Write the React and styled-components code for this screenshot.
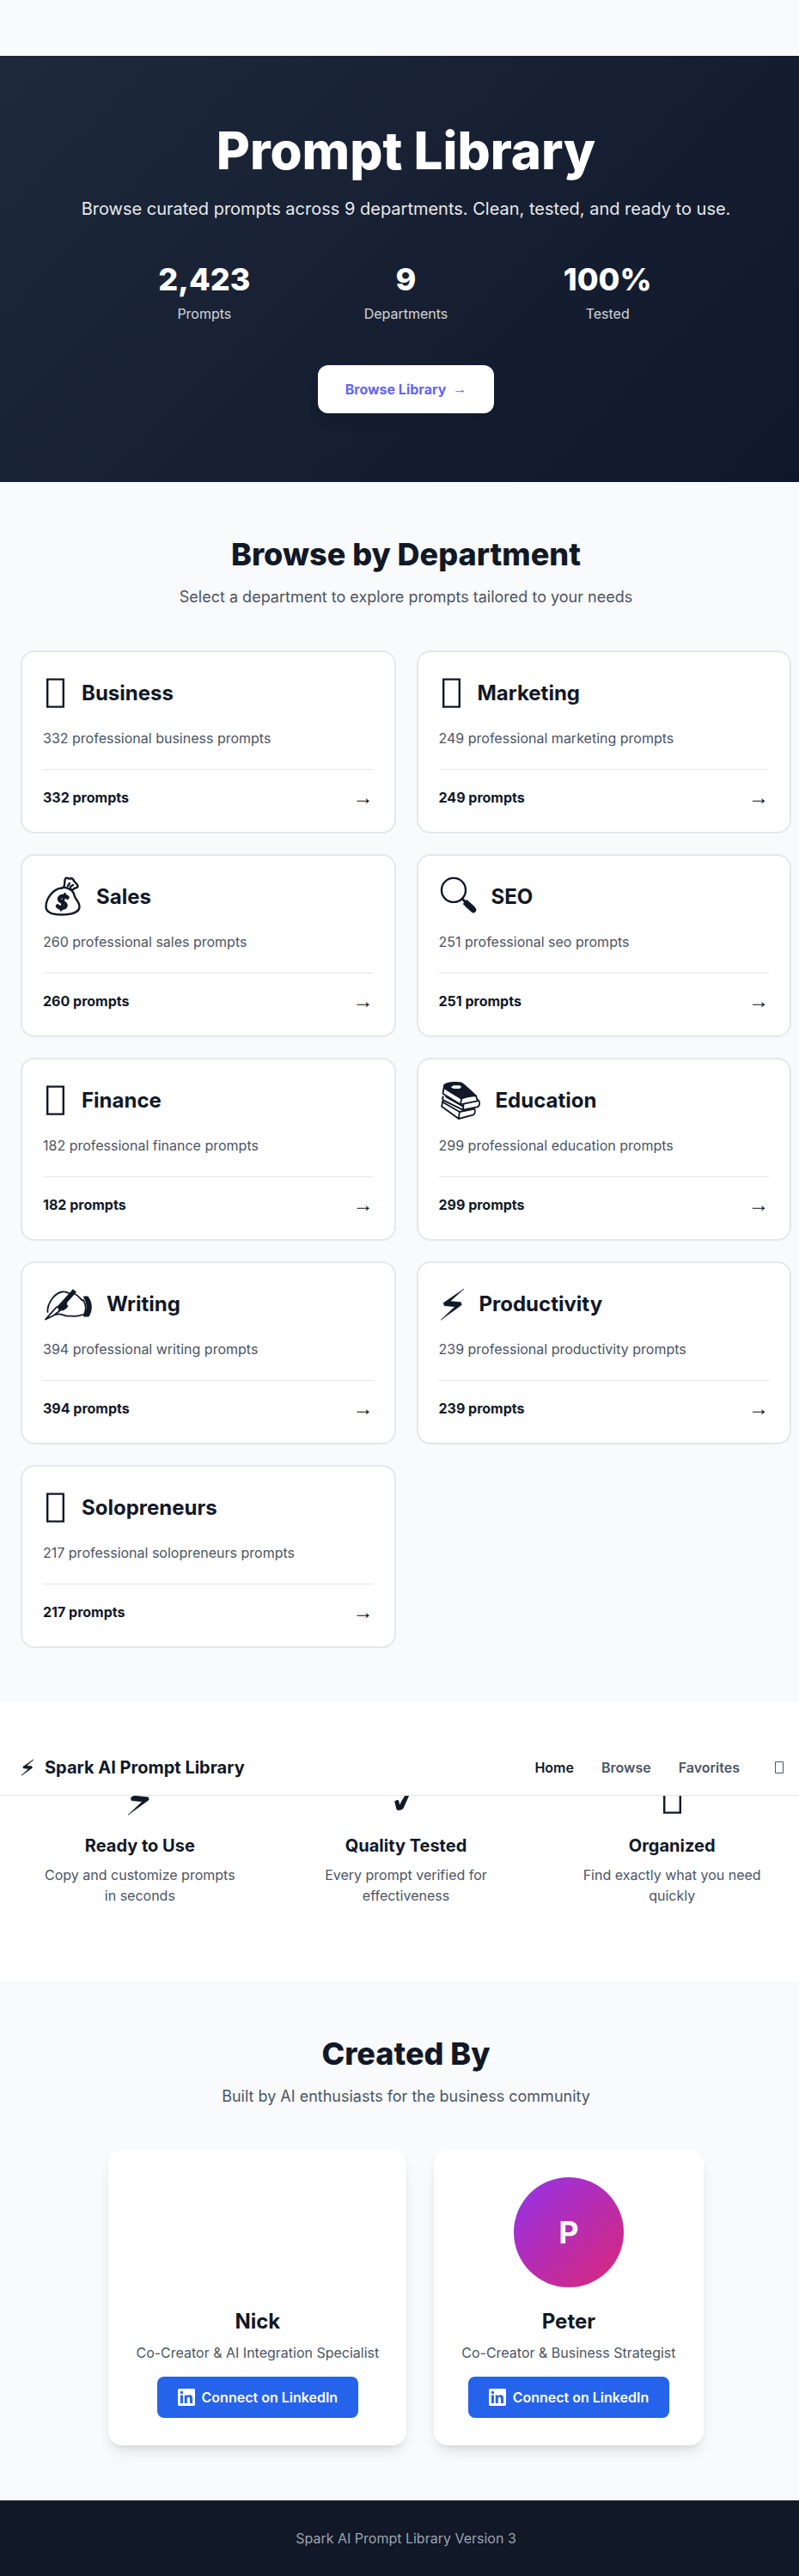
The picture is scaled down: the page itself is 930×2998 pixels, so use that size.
import React from "react";
import styled, { createGlobalStyle } from "styled-components";

const GlobalStyle = createGlobalStyle`
  *, *::before, *::after { box-sizing: border-box; }
  body {
    margin: 0;
    overflow-x: hidden;
    background: #f9fafb;
    color: #111827;
    font-family: Inter, sans-serif;
    font-size: 16px;
    line-height: 24px;
  }
  h1, h2, h3, p { margin: 0; }
  a { color: inherit; text-decoration: none; }
  button { font: inherit; cursor: pointer; }
  svg { display: block; flex: none; }
`;

/* The page runs under the 15px scrollbar gutter on its right side. */
const Page = styled.div`
  width: calc(100% + 15px);
  padding-top: 65px;
`;

const Container = styled.div`
  max-width: 1280px;
  margin: 0 auto;
  padding: 0 24px;
`;

const Hero = styled.section`
  padding: 80px 24px;
  color: #ffffff;
  text-align: center;
  background: linear-gradient(135deg, #1e293b 0%, #0f172a 100%);
`;

const HeroTitle = styled.h1`
  margin-bottom: 24px;
  font-size: 60px;
  line-height: 60px;
  font-weight: 800;
`;

const HeroText = styled.p`
  margin-bottom: 48px;
  font-size: 20px;
  line-height: 28px;
  opacity: 0.9;
`;

const Stats = styled.div`
  display: grid;
  grid-template-columns: repeat(3, 1fr);
  gap: 32px;
  max-width: 672px;
  margin: 0 auto 48px;
`;

const StatValue = styled.div`
  margin-bottom: 8px;
  font-size: 36px;
  line-height: 40px;
  font-weight: 800;
`;

const StatLabel = styled.div`
  opacity: 0.8;
`;

const HeroLink = styled.a`
  display: inline-flex;
  align-items: center;
  gap: 8px;
  padding: 16px 32px;
  border-radius: 12px;
  background: #ffffff;
  color: #6366f1;
  font-weight: 700;
  vertical-align: top;
  box-shadow: 0 10px 15px -3px rgba(0, 0, 0, 0.1);
`;

const Arrow = styled.span`
  font-family: "Liberation Sans", sans-serif;
  font-size: ${(p) => (p.$large ? "24px" : "16px")};
  line-height: ${(p) => (p.$large ? "32px" : "24px")};
`;

const Section = styled.section`
  position: relative;
  padding: 64px 0;
  background: ${(p) => (p.$white ? "#ffffff" : "transparent")};
`;

const SectionHead = styled.div`
  margin-bottom: 48px;
  text-align: center;
`;

const SectionTitle = styled.h2`
  margin-bottom: 16px;
  font-size: 36px;
  line-height: 40px;
  font-weight: 800;
`;

const SectionText = styled.p`
  color: #4b5563;
  font-size: 18px;
  line-height: 28px;
`;

const CardGrid = styled.div`
  display: grid;
  grid-template-columns: repeat(2, 1fr);
  gap: 24px;
`;

const Card = styled.a`
  display: block;
  padding: 24px;
  border: 2px solid #e5e7eb;
  border-radius: 16px;
  background: #ffffff;
`;

const CardHead = styled.div`
  display: flex;
  align-items: center;
  gap: 16px;
  margin-bottom: 16px;
`;

const CardTitle = styled.h3`
  font-size: 24px;
  line-height: 32px;
  font-weight: 700;
`;

const CardText = styled.p`
  margin-bottom: 24px;
  color: #4b5563;
`;

const CardFoot = styled.div`
  display: flex;
  align-items: center;
  justify-content: space-between;
  padding-top: 16px;
  border-top: 1px solid #e5e7eb;
`;

const CardCount = styled.span`
  font-weight: 700;
`;

const Header = styled.header`
  position: absolute;
  top: 43px;
  left: 0;
  right: 0;
  z-index: 1;
  border-bottom: 1px solid #e5e7eb;
  background: #ffffff;
`;

const HeaderBar = styled(Container)`
  display: flex;
  align-items: center;
  justify-content: space-between;
  height: 64px;
`;

const Brand = styled.a`
  display: flex;
  align-items: center;
  gap: 12px;
  font-size: 20px;
  line-height: 28px;
  font-weight: 700;
`;

const Nav = styled.nav`
  display: flex;
  align-items: center;
  gap: 32px;
`;

const NavLink = styled.a`
  color: ${(p) => (p.$active ? "#111827" : "#4b5563")};
  font-weight: 600;
`;

const ThemeButton = styled.button`
  padding: 8px;
  border: 0;
  background: transparent;
  color: #4b5563;
`;

const FeatureGrid = styled.div`
  display: grid;
  grid-template-columns: repeat(3, 1fr);
  gap: 32px;
`;

const Feature = styled.div`
  padding: 24px;
  text-align: center;
`;

const FeatureIcon = styled.div`
  display: flex;
  justify-content: center;
  margin-bottom: 16px;
`;

const FeatureTitle = styled.h3`
  margin-bottom: 8px;
  font-size: 20px;
  line-height: 28px;
  font-weight: 700;
`;

const FeatureText = styled.p`
  color: #4b5563;
`;

const People = styled.div`
  display: flex;
  justify-content: center;
  gap: 32px;
`;

const Person = styled.article`
  display: flex;
  flex-direction: column;
  align-items: center;
  padding: 32px;
  border-radius: 16px;
  background: #ffffff;
  box-shadow: 0 10px 15px -3px rgba(0, 0, 0, 0.1), 0 4px 6px -4px rgba(0, 0, 0, 0.1);
`;

const Avatar = styled.div`
  display: flex;
  align-items: center;
  justify-content: center;
  width: 128px;
  height: 128px;
  margin-bottom: 24px;
  border-radius: 50%;
  color: #ffffff;
  font-size: 36px;
  line-height: 40px;
  font-weight: 700;
  background: ${(p) => (p.$filled ? "linear-gradient(135deg, #9333ea, #db2777)" : "transparent")};
`;

const PersonName = styled.h3`
  margin-bottom: 8px;
  font-size: 24px;
  line-height: 32px;
  font-weight: 700;
`;

const PersonRole = styled.p`
  margin-bottom: 16px;
  color: #4b5563;
`;

const LinkedInLink = styled.a`
  display: inline-flex;
  align-items: center;
  gap: 8px;
  padding: 12px 24px;
  border-radius: 8px;
  background: #2563eb;
  color: #ffffff;
  font-weight: 600;
`;

const Footer = styled.footer`
  padding: 32px 24px;
  background: #111827;
  color: #9ca3af;
  text-align: center;
`;

function BoxIcon() {
  return (
    <svg width="29" height="48" viewBox="0 0 29 48" fill="none" stroke="currentColor" strokeWidth="2.400" aria-hidden="true">
      <path d="M5.200 7.600h18.600v32H5.200z" />
    </svg>
  );
}

function SmallBoxIcon() {
  return (
    <svg width="12" height="16" viewBox="0 0 12 16" fill="none" stroke="currentColor" aria-hidden="true">
      <path d="M1.500 1.500h9v13h-9z" />
    </svg>
  );
}

function BoltIcon({ small }) {
  return (
    <svg width={small ? 16 : 31} height={small ? 24 : 48} viewBox="0 0 31 48" fill="currentColor" aria-hidden="true">
      <path
        d="M29 6 5.300 22.300 6 25.600 18.500 26.800 2 42.300 26.200 24.800 25.500 21.600 13 20.400Z"
        stroke="currentColor"
        strokeWidth={small ? 1.4 : 0.5}
      />
    </svg>
  );
}

function CheckIcon() {
  return (
    <svg width="40" height="48" viewBox="0 0 40 48" fill="currentColor" aria-hidden="true">
      <path d="M7.200 27C8.600 25 11 24 11.800 25.200 12.600 26.400 12.600 29 13.400 30.400 16 24 19 20.500 26 10L31 7.500C25 16 22 25 17.600 34.600 15.500 37.200 11 37.200 10 36.400 8.600 34 8.400 29.500 7.200 27Z" />
    </svg>
  );
}

function MoneyBagIcon() {
  return (
    <svg width="46" height="48" viewBox="0 0 46 48" fill="none" stroke="currentColor" strokeWidth="2.400" strokeLinecap="round" strokeLinejoin="round" aria-hidden="true">
      <path d="M22 13.500C12 14 3.500 26 3.500 35c0 7 7 9.500 18 9.500s21-2.500 21-9.500c0-6-5-8-6-13-.5-4-3-5-4.500-7.500" />
      <path d="M22 13.500c3-1.500 8 0 10 2.200M24 12.500c2.500-3 0-7.500 2.500-10.500 1.500-1.500 3 1.500 5 .5 3-1 4 1 5 3.500 2 2 4.500 3 4 6-1 2-3.500 1-4.500 2.500-1.500 2-3 .5-4.500 0M29 11l2-3M32 12l3-2" />
      <path strokeWidth="4.500" d="M28.500 24.500c-2-2.500-9-2-9.500 1.500-.5 4.500 8.500 3.500 7.500 8-.8 3.500-7 3.500-9.500.5" />
      <path strokeWidth="3" d="M25.500 20.500 21 39" />
    </svg>
  );
}

function SearchIcon() {
  return (
    <svg width="45" height="48" viewBox="0 0 45 48" fill="none" stroke="currentColor" strokeLinecap="round" aria-hidden="true">
      <circle cx="17" cy="15.900" r="14" strokeWidth="2.400" />
      <path strokeWidth="3" d="m27 26 4.500 4.500" />
      <path strokeWidth="7" strokeLinecap="butt" d="m30 29.500 9.500 8.500" />
      <path strokeWidth="6.500" d="m33.500 33 6.500 6" />
    </svg>
  );
}

function BooksIcon() {
  return (
    <svg width="50" height="48" viewBox="91.500 831 150 144" fill="none" stroke="currentColor" strokeWidth="5.500" strokeLinejoin="round" strokeLinecap="round" aria-hidden="true">
      <path fill="currentColor" d="M109 850C116 840 140 839 158 840q12 0 18 6L221 886Q190 887 170 896L109 859Z" />
      <path fill="#ffffff" stroke="none" d="m133 856 9-6h22l6 5-7 6h-21z" />
      <path d="M108 860 105 878 166 916 226 904 221 887M170 897 166 916" />
      <path d="M106 889c-3 5-3 9 0 12l68 34M177 917l-2 18 50-10c9-3 11-15 4-24M116 889l58 33" />
      <path d="M104 905 101 923 160 966 210 953c8-4 9-14 5-22M106 909l57 33 52-10M163 942l-3 24" />
    </svg>
  );
}

function WritingIcon() {
  return (
    <svg width="58" height="48" viewBox="0 0 58 48" fill="none" stroke="currentColor" strokeWidth="1.800" strokeLinecap="round" strokeLinejoin="round" aria-hidden="true">
      <path d="M5.500 33C4.500 24 13 11 22 9.500c3-.5 6 0 8 1.500" />
      <path strokeWidth="5.500" strokeLinecap="butt" d="M37 8 18 29" />
      <path d="M16 27 3 41.500 12.500 37 20 31" />
      <path d="M37 12c4 1.500 6 5 9 7.500M18.500 30c4 1.500 8-1 10-4M27 19c0 3 1 5-.5 8M15 36c6-2 8 1 13 1.500 7 0 12 1.500 18-1.500" />
      <path fill="currentColor" d="M20 29 26 23l1 4-4 3.500z" />
      <path d="M47 19c3 5 3.500 12 .5 18" />
      <path fill="currentColor" d="M48 15.500h4c5 7 5 15.500 1 22h-5c4.500-7 4.500-15 0-22z" />
    </svg>
  );
}

const departments = [
  { name: "Business", icon: BoxIcon, count: 332 },
  { name: "Marketing", icon: BoxIcon, count: 249 },
  { name: "Sales", icon: MoneyBagIcon, count: 260 },
  { name: "SEO", icon: SearchIcon, count: 251 },
  { name: "Finance", icon: BoxIcon, count: 182 },
  { name: "Education", icon: BooksIcon, count: 299 },
  { name: "Writing", icon: WritingIcon, count: 394 },
  { name: "Productivity", icon: BoltIcon, count: 239 },
  { name: "Solopreneurs", icon: BoxIcon, count: 217 },
];

const stats = [
  { value: "2,423", label: "Prompts" },
  { value: "9", label: "Departments" },
  { value: "100%", label: "Tested" },
];

const features = [
  { icon: BoltIcon, title: "Ready to Use", text: "Copy and customize prompts in seconds" },
  { icon: CheckIcon, title: "Quality Tested", text: "Every prompt verified for effectiveness" },
  { icon: BoxIcon, title: "Organized", text: "Find exactly what you need quickly" },
];

const people = [
  { name: "Nick", role: "Co-Creator & AI Integration Specialist", initial: "" },
  { name: "Peter", role: "Co-Creator & Business Strategist", initial: "P" },
];

function LinkedInIcon() {
  return (
    <svg width="20" height="20" viewBox="0 0 24 24" fill="currentColor" aria-hidden="true">
      <path d="M20.447 20.452h-3.554v-5.569c0-1.328-.027-3.037-1.852-3.037-1.853 0-2.136 1.445-2.136 2.939v5.667H9.351V9h3.414v1.561h.046c.477-.9 1.637-1.85 3.37-1.85 3.601 0 4.267 2.37 4.267 5.455v6.286zM5.337 7.433a2.062 2.062 0 0 1-2.063-2.065 2.064 2.064 0 1 1 2.063 2.065zm1.782 13.019H3.555V9h3.564v11.452zM22.225 0H1.771C.792 0 0 .774 0 1.729v20.542C0 23.227.792 24 1.771 24h20.451C23.2 24 24 23.227 24 22.271V1.729C24 .774 23.2 0 22.222 0h.003z" />
    </svg>
  );
}

export default function App() {
  return (
    <>
      <GlobalStyle />
      <Page>
        <Hero>
          <HeroTitle>Prompt Library</HeroTitle>
          <HeroText>Browse curated prompts across 9 departments. Clean, tested, and ready to use.</HeroText>
          <Stats>
            {stats.map((s) => (
              <div key={s.label}>
                <StatValue>{s.value}</StatValue>
                <StatLabel>{s.label}</StatLabel>
              </div>
            ))}
          </Stats>
          <HeroLink href="#departments">
            Browse Library <Arrow>→</Arrow>
          </HeroLink>
        </Hero>

        <Section id="departments">
          <Container>
            <SectionHead>
              <SectionTitle>Browse by Department</SectionTitle>
              <SectionText>Select a department to explore prompts tailored to your needs</SectionText>
            </SectionHead>
            <CardGrid>
              {departments.map(({ name, icon: Icon, count }) => (
                <Card key={name} href={`#${name.toLowerCase()}`}>
                  <CardHead>
                    <Icon />
                    <CardTitle>{name}</CardTitle>
                  </CardHead>
                  <CardText>{`${count} professional ${name.toLowerCase()} prompts`}</CardText>
                  <CardFoot>
                    <CardCount>{`${count} prompts`}</CardCount>
                    <Arrow $large>→</Arrow>
                  </CardFoot>
                </Card>
              ))}
            </CardGrid>
          </Container>
        </Section>

        <Section $white>
          <Header>
            <HeaderBar>
              <Brand href="#">
                <BoltIcon small />
                <span>Spark AI Prompt Library</span>
              </Brand>
              <Nav>
                <NavLink href="#" $active>Home</NavLink>
                <NavLink href="#browse">Browse</NavLink>
                <NavLink href="#favorites">Favorites</NavLink>
                <ThemeButton type="button" aria-label="Toggle theme">
                  <SmallBoxIcon />
                </ThemeButton>
              </Nav>
            </HeaderBar>
          </Header>
          <Container>
            <FeatureGrid>
              {features.map(({ icon: Icon, title, text }) => (
                <Feature key={title}>
                  <FeatureIcon>
                    <Icon />
                  </FeatureIcon>
                  <FeatureTitle>{title}</FeatureTitle>
                  <FeatureText>{text}</FeatureText>
                </Feature>
              ))}
            </FeatureGrid>
          </Container>
        </Section>

        <Section>
          <Container>
            <SectionHead>
              <SectionTitle>Created By</SectionTitle>
              <SectionText>Built by AI enthusiasts for the business community</SectionText>
            </SectionHead>
            <People>
              {people.map((p) => (
                <Person key={p.name}>
                  <Avatar $filled={Boolean(p.initial)}>{p.initial}</Avatar>
                  <PersonName>{p.name}</PersonName>
                  <PersonRole>{p.role}</PersonRole>
                  <LinkedInLink href="#linkedin">
                    <LinkedInIcon />
                    Connect on LinkedIn
                  </LinkedInLink>
                </Person>
              ))}
            </People>
          </Container>
        </Section>

        <Footer>Spark AI Prompt Library Version 3</Footer>
      </Page>
    </>
  );
}
